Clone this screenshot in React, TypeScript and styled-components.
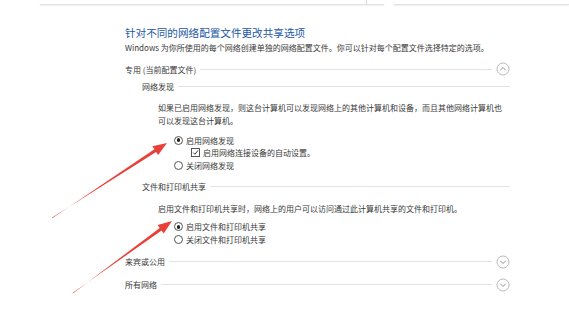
import React from 'react';
import styled, { createGlobalStyle } from 'styled-components';

const GlobalStyle = createGlobalStyle`
  html, body {
    margin: 0;
    padding: 0;
    background: #ffffff;
  }
  body {
    font-family: "Noto Sans CJK SC", "Microsoft YaHei", sans-serif;
    color: #383838;
    -webkit-font-smoothing: antialiased;
  }
`;

const Page = styled.div`
  position: relative;
  width: 569px;
  height: 312px;
  overflow: hidden;
  background: #fff;
`;

const TopBar = styled.div`
  display: flex;
  height: 5px;
  padding-left: 40px;
  gap: 10px;
`;

const TopBox = styled.div<{ w: number }>`
  width: ${({ w }) => w}px;
  flex: ${({ w }) => (w ? 'none' : '1')};
  height: 4px;
  border-bottom: 1px solid #e2e2e2;
  box-shadow: 0 1px 2px rgba(0, 0, 0, 0.06);
  display: flex;
  justify-content: flex-end;
`;

const TopDivider = styled.div`
  width: 1px;
  height: 5px;
  margin-right: 17px;
  background: #d8d8d8;
`;

const Content = styled.div`
  width: 385px;
  padding-left: 125px;
  font-size: 8px;
`;

const Title = styled.div`
  margin-top: 21px;
  font-size: 10.6px;
  line-height: 14px;
  color: #2257a6;
`;

const Subtitle = styled.div`
  margin-top: 2px;
  line-height: 12px;
`;

const HeaderRow = styled.div<{ indent?: number; top: number }>`
  display: flex;
  align-items: center;
  gap: 4px;
  height: 14px;
  margin-top: ${({ top }) => top}px;
  padding-left: ${({ indent }) => indent || 0}px;
`;

const HeaderLabel = styled.span`
  white-space: nowrap;
`;

const Rule = styled.div`
  flex: 1;
  height: 1px;
  background: #e3e3e3;
`;

const Para = styled.div<{ top: number }>`
  margin-top: ${({ top }) => top}px;
  padding-left: 33px;
  line-height: 13px;
  white-space: nowrap;
`;

const Options = styled.div<{ top: number }>`
  margin-top: ${({ top }) => top}px;
  padding-left: 49px;
`;

const OptionRow = styled.label<{ indent?: number }>`
  display: flex;
  align-items: center;
  gap: 3px;
  height: 12.5px;
  padding-left: ${({ indent }) => indent || 0}px;
  white-space: nowrap;
`;

const Radio = styled.span<{ checked?: boolean }>`
  position: relative;
  width: 7px;
  height: 7px;
  border: 0.8px solid #555;
  border-radius: 50%;
  background: #fff;
  flex: none;

  &::after {
    content: '';
    display: ${({ checked }) => (checked ? 'block' : 'none')};
    position: absolute;
    left: 1.7px;
    top: 1.7px;
    width: 3.6px;
    height: 3.6px;
    border-radius: 50%;
    background: #222;
  }
`;

const CheckBox = styled.span`
  width: 7px;
  height: 7px;
  border: 0.8px solid #555;
  background: #fff;
  flex: none;
  display: flex;
  align-items: center;
  justify-content: center;
`;

const Overlay = styled.svg`
  position: absolute;
  left: 0;
  top: 0;
  pointer-events: none;
`;

const Chevron: React.FC<{ up?: boolean }> = ({ up }) => (
  <svg width="14" height="14" viewBox="0 0 14 14">
    <circle cx="7" cy="7" r="6" fill="#fff" stroke="#a8a8a8" strokeWidth="0.8" />
    <path
      d={up ? 'M4.3 8.2 L7 5.5 L9.7 8.2' : 'M4.3 5.8 L7 8.5 L9.7 5.8'}
      fill="none"
      stroke="#888"
      strokeWidth="0.9"
    />
  </svg>
);

const Tick = () => (
  <svg width="7" height="7" viewBox="0 0 7 7">
    <path d="M1.2 3.6 L2.9 5.3 L6 1.4" fill="none" stroke="#222" strokeWidth="0.9" />
  </svg>
);

const arrow = (tail: [number, number], tip: [number, number]) => {
  const dx = tip[0] - tail[0];
  const dy = tip[1] - tail[1];
  const len = Math.hypot(dx, dy);
  const ux = dx / len;
  const uy = dy / len;
  const nx = -uy;
  const ny = ux;
  const bx = tip[0] - 14 * ux;
  const by = tip[1] - 14 * uy;
  const p = (x: number, y: number) => `${x.toFixed(1)},${y.toFixed(1)}`;
  return [
    p(tail[0] - 0.4 * nx, tail[1] - 0.4 * ny),
    p(bx + 1.6 * nx, by + 1.6 * ny),
    p(bx + 5.2 * nx, by + 5.2 * ny),
    p(tip[0], tip[1]),
    p(bx - 5.2 * nx, by - 5.2 * ny),
    p(bx - 1.6 * nx, by - 1.6 * ny),
    p(tail[0] + 0.4 * nx, tail[1] + 0.4 * ny),
  ].join(' ');
};

export default function App() {
  return (
    <Page>
      <GlobalStyle />
      <TopBar>
        <TopBox w={344}>
          <TopDivider />
        </TopBox>
        <TopBox w={0} />
      </TopBar>

      <Content>
        <Title>针对不同的网络配置文件更改共享选项</Title>
        <Subtitle>Windows 为你所使用的每个网络创建单独的网络配置文件。你可以针对每个配置文件选择特定的选项。</Subtitle>

        <HeaderRow top={8}>
          <HeaderLabel>专用 (当前配置文件)</HeaderLabel>
          <Rule />
          <Chevron up />
        </HeaderRow>

        <HeaderRow top={3} indent={17}>
          <HeaderLabel>网络发现</HeaderLabel>
          <Rule />
        </HeaderRow>

        <Para top={7.5}>
          如果已启用网络发现，则这台计算机可以发现网络上的其他计算机和设备，而且其他网络计算机也
          <br />
          可以发现这台计算机。
        </Para>

        <Options top={7.5}>
          <OptionRow>
            <Radio checked />
            启用网络发现
          </OptionRow>
          <OptionRow indent={17}>
            <CheckBox>
              <Tick />
            </CheckBox>
            启用网络连接设备的自动设置。
          </OptionRow>
          <OptionRow>
            <Radio />
            关闭网络发现
          </OptionRow>
        </Options>

        <HeaderRow top={8} indent={17}>
          <HeaderLabel>文件和打印机共享</HeaderLabel>
          <Rule />
        </HeaderRow>

        <Para top={8.5}>启用文件和打印机共享时，网络上的用户可以访问通过此计算机共享的文件和打印机。</Para>

        <Options top={5.5}>
          <OptionRow>
            <Radio checked />
            启用文件和打印机共享
          </OptionRow>
          <OptionRow>
            <Radio />
            关闭文件和打印机共享
          </OptionRow>
        </Options>

        <HeaderRow top={9}>
          <HeaderLabel>来宾或公用</HeaderLabel>
          <Rule />
          <Chevron />
        </HeaderRow>

        <HeaderRow top={9}>
          <HeaderLabel>所有网络</HeaderLabel>
          <Rule />
          <Chevron />
        </HeaderRow>
      </Content>

      <Overlay width="569" height="312" viewBox="0 0 569 312">
        <polygon points={arrow([52, 218], [167, 143])} fill="#e8413a" />
        <polygon points={arrow([73, 293], [172, 221])} fill="#e8413a" />
      </Overlay>
    </Page>
  );
}
